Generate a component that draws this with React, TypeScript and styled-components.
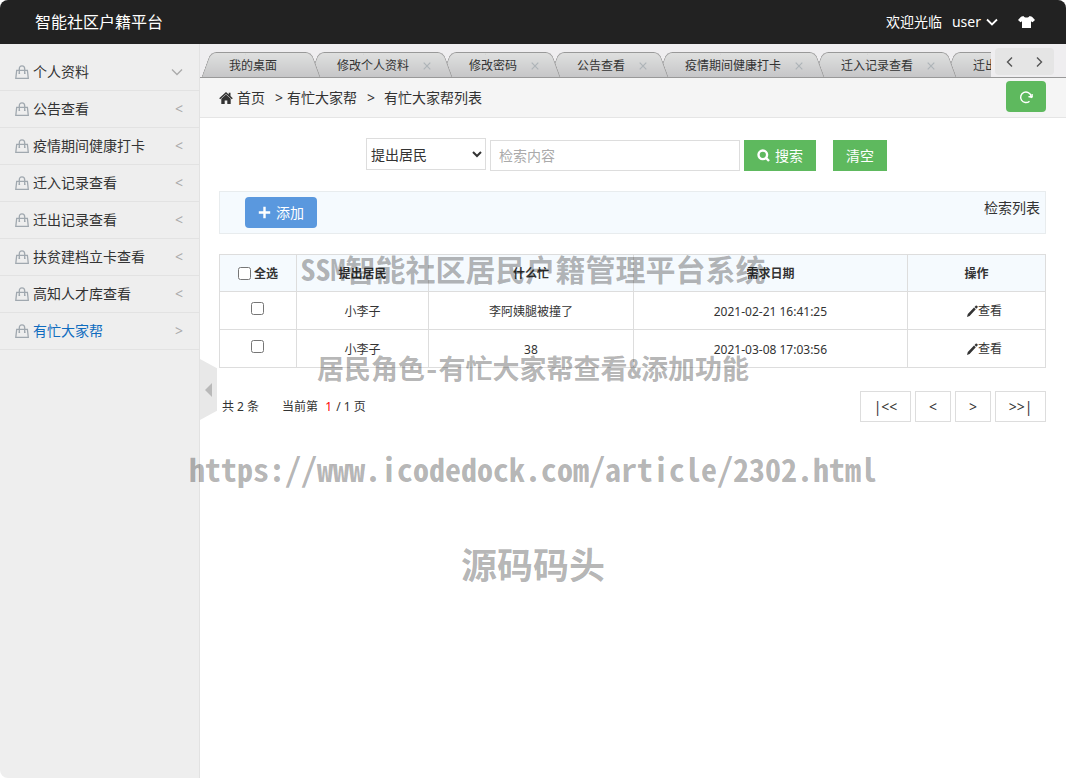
import React from 'react';
import styled, { createGlobalStyle } from 'styled-components';

const GlobalStyle = createGlobalStyle`
  *, *::before, *::after { box-sizing: border-box; }
  html { background: #fff; }
  body {
    margin: 0;
    color: #333;
    font: 14px/20px "Noto Sans", "Noto Sans CJK SC", sans-serif;
  }
  button, input, select { font: inherit; color: inherit; margin: 0; }
  button { cursor: pointer; border: 0; padding: 0; background: none; }
  a { color: inherit; text-decoration: none; }
`;

const Page = styled.div`
  position: relative;
  display: flex;
  flex-direction: column;
  min-height: 100vh;
  overflow: hidden;
  border-radius: 8px;
  background: #fff;
`;

const Header = styled.header`
  display: flex;
  align-items: center;
  justify-content: space-between;
  height: 44px;
  padding: 0 31px 0 35px;
  background: #222;
  color: #fff;
`;

const Brand = styled.h1`
  margin: 0;
  font-size: 16px;
  font-weight: 400;
  line-height: 24px;
`;

const UserArea = styled.div`
  display: flex;
  align-items: center;
  gap: 10px;
`;

const HeaderButton = styled.button`
  display: flex;
  align-items: center;
  gap: 5px;
`;

const SkinButton = styled(HeaderButton)`
  margin-left: 10px;
`;

const Body = styled.div`
  display: flex;
  flex: 1;
`;

const Sidebar = styled.nav`
  flex: none;
  width: 200px;
  padding-top: 10px;
  background: #eee;
  border-right: 1px solid #e2e2e2;
`;

const MenuItem = styled.a<{ $active?: boolean }>`
  display: flex;
  align-items: center;
  gap: 4px;
  height: 37px;
  padding: 0 16px 0 15px;
  border-bottom: 1px solid #e2e2e2;
  color: ${(p) => (p.$active ? '#0f6cbf' : '#333')};
`;

const MenuLabel = styled.span`
  flex: 1;
`;

const MenuArrow = styled.span`
  display: flex;
  color: #aaa;
`;

const CollapseHandle = styled.button`
  position: absolute;
  top: 50%;
  left: 200px;
  display: flex;
  align-items: center;
  width: 17px;
  height: 61px;
  margin-top: -30px;
  padding-left: 5px;
  background: #e8e8e8;
  clip-path: polygon(0 0, 100% 15%, 100% 85%, 0 100%);
`;

const Main = styled.main`
  flex: 1;
  min-width: 0;
`;

const TabBar = styled.div`
  display: flex;
  align-items: flex-end;
  height: 34px;
  background: #efeef0;
  border-bottom: 1px solid #999;
`;

const TabList = styled.div`
  display: flex;
  flex: 1;
  min-width: 0;
  overflow: hidden;
  padding-left: 1px;
`;

const Tab = styled.div<{ $order: number }>`
  position: relative;
  z-index: ${(p) => p.$order};
  display: flex;
  flex: none;
  align-items: center;
  height: 25px;
  margin-right: -12px;
  padding: 2px 22px 0 28px;
  font-size: 12px;

  &::before,
  &::after {
    content: '';
    position: absolute;
    z-index: -1;
    top: 0;
    bottom: 0;
    border-top: 1px solid #999;
    background: linear-gradient(#dfe0df, #c6c6c8);
  }
  &::before {
    left: 5px;
    right: 40%;
    border-left: 1px solid #999;
    border-radius: 6px 0 0 0;
    transform: skewX(-20deg);
  }
  &::after {
    left: 40%;
    right: 5px;
    border-right: 1px solid #999;
    border-radius: 0 6px 0 0;
    transform: skewX(20deg);
  }
`;

const TabTitle = styled.button`
  z-index: 1;
  white-space: nowrap;
  line-height: 20px;
`;

const TabClose = styled.button`
  z-index: 1;
  display: flex;
  justify-content: flex-end;
  width: 22px;
  color: #aeb4b8;
`;

const TabPager = styled.div`
  display: flex;
  align-items: center;
  justify-content: space-around;
  width: 59px;
  height: 27px;
  margin: 0 12px 2px 4px;
  border-radius: 4px;
  background: #e5e5e5;
  color: #555;
`;

const Breadcrumb = styled.nav`
  display: flex;
  align-items: center;
  height: 40px;
  padding: 0 20px 0 19px;
  background: #f5f5f5;
  border-bottom: 1px solid #e5e5e5;
`;

const Crumb = styled.a`
  display: flex;
  align-items: center;
  gap: 4px;
`;

const CrumbSep = styled.span`
  padding: 0 9px 0 10px;
  &:first-of-type { padding-right: 4px; }
`;

const RefreshButton = styled.button`
  display: flex;
  align-items: center;
  justify-content: center;
  width: 40px;
  height: 31px;
  margin: 0 0 2px auto;
  border-radius: 4px;
  background: #5eb95e;
`;

const Content = styled.div`
  padding: 20px 20px 0 19px;
`;

const SearchForm = styled.form`
  display: flex;
  align-items: flex-end;
  justify-content: center;
  gap: 4px;
  height: 33px;
  padding-right: 12px;
`;

const Field = styled.select`
  align-self: flex-start;
  width: 120px;
  height: 32px;
  border: 1px solid #ddd;
  border-radius: 0;
  background: #fff;
`;

const Keyword = styled.input`
  width: 250px;
  height: 31px;
  padding: 0 8px;
  border: 1px solid #ddd;
  border-radius: 0;
  &::placeholder { color: #aaa; opacity: 1; }
`;

const ActionButton = styled.button<{ $tone: string; $rounded?: boolean }>`
  display: flex;
  align-items: center;
  gap: 5px;
  height: 31px;
  padding: 0 13px;
  border-radius: ${(p) => (p.$rounded ? 4 : 0)}px;
  background: ${(p) => p.$tone};
  color: #fff;
`;

const ClearButton = styled(ActionButton)`
  margin-left: 13px;
`;

const Toolbar = styled.div`
  display: flex;
  align-items: flex-start;
  justify-content: space-between;
  height: 43px;
  margin-top: 20px;
  padding: 5px 5px 5px 25px;
  border: 1px solid #e8ecee;
  background: #f5fafe;
`;

const ToolbarNote = styled.span`
  padding-top: 1px;
`;

const Table = styled.table`
  width: 100%;
  margin-top: 20px;
  border-collapse: collapse;
  table-layout: fixed;
  font-size: 12px;
  text-align: center;

  th, td {
    height: 38px;
    padding: 2px 0 0;
    border: 1px solid #ddd;
  }
  th {
    height: 37px;
    background: #f5fafe;
    font-weight: 700;
  }
`;

const Col = styled.col<{ $share: number }>`
  width: ${(p) => p.$share}%;
`;

const Check = styled.input`
  display: block;
  width: 13px;
  height: 13px;
  margin: 0 auto;
`;

const RowCheck = styled(Check)`
  margin-bottom: 6px;
`;

const CheckAll = styled.label`
  display: flex;
  align-items: center;
  justify-content: center;
  gap: 3px;
  ${Check} { margin: 0 0 2px; }
`;

const RowLink = styled.a`
  display: flex;
  align-items: center;
  justify-content: center;
  padding: 0 0 2px 16px;
`;

const Footer = styled.div`
  display: flex;
  align-items: center;
  justify-content: space-between;
  margin-top: 23px;
`;

const Summary = styled.div`
  display: flex;
  gap: 23px;
  padding-left: 3px;
  font-size: 12px;
`;

const CurrentPage = styled.span`
  margin: 0 1px 0 4px;
  color: #f00;
`;

const Pager = styled.div`
  display: flex;
  gap: 4px;
`;

const PageButton = styled.button<{ $wide?: boolean }>`
  width: ${(p) => (p.$wide ? 51 : 36)}px;
  height: 31px;
  border: 1px solid #ddd;
  background: #fff;
`;

const Watermark = styled.div`
  position: absolute;
  z-index: 20;
  top: 248px;
  left: 0;
  right: 0;
  display: flex;
  flex-direction: column;
  align-items: center;
  gap: 60px;
  color: rgba(0, 0, 0, 0.3);
  font-family: "Noto Sans Mono CJK SC", "Noto Sans CJK SC", monospace;
  font-weight: 700;
  pointer-events: none;
`;

const MarkLine = styled.div<{ $size: number; $height?: number }>`
  height: ${(p) => p.$height ?? 40}px;
  font-size: ${(p) => p.$size}px;
  line-height: ${(p) => p.$height ?? 40}px;
  white-space: nowrap;
`;

function Chevron({ dir, size = 12, width = 1.6 }: { dir: 'down' | 'left' | 'right'; size?: number; width?: number }) {
  const d = { down: 'M1 3.5l5 5 5-5', left: 'M8 1.5L3.5 6 8 10.5', right: 'M4 1.5L8.5 6 4 10.5' }[dir];
  return (
    <svg width={size} height={size} viewBox="0 0 12 12" fill="none" stroke="currentColor" strokeWidth={width}>
      <path d={d} />
    </svg>
  );
}

const BagIcon = () => (
  <svg width="14" height="14" viewBox="0 0 14 14" fill="none" stroke="#a0a8af" strokeWidth="1.3">
    <path d="M1.700 5.400h10.700l.900 7.900H.800z" />
    <path d="M4.300 8.600V4C4.300 1.900 5.300.900 7 .900s2.700 1 2.700 3.100v4.600" />
    <path d="M3.600 8.300h1.500M9 8.300h1.500" />
  </svg>
);

const ShirtIcon = () => (
  <svg width="17" height="14" viewBox="0 0 17 14" fill="#fff">
    <path d="M5.400 1c.700 1 1.800 1.500 3.100 1.500S10.900 2 11.600 1L14 1.700 17 5l-2.500 2.300-1.500-1V13H4V6.300l-1.500 1L0 5l3-3.300z" />
  </svg>
);

const HomeIcon = () => (
  <svg width="14" height="12" viewBox="0 0 14 12" fill="#333">
    <path d="M7 0L.200 6.200l1 1L7 2l5.800 5.200 1-1L11.500 4V.800H9.700v1.600z" />
    <path d="M7 2.400L2.300 6.800V12h3.400V8.500h2.600V12h3.400V6.800z" />
  </svg>
);

const RefreshIcon = () => (
  <svg width="14" height="14" viewBox="0 0 14 14" fill="none" stroke="#fff" strokeWidth="1.400">
    <path d="M10.500 11.200A5.300 5.300 0 1 1 12.100 6" />
    <path d="M9.400 6.300h4.300L12.600 8.300z" fill="#fff" stroke="none" />
    <path d="M9.500 6.800h3.600V4" />
  </svg>
);

const SearchIcon = () => (
  <svg width="13" height="13" viewBox="0 0 13 13" fill="none" stroke="#fff" strokeWidth="2.400">
    <circle cx="5.800" cy="5.800" r="4.300" />
    <path d="M8.700 8.700l3.300 3.300" />
  </svg>
);

const PlusIcon = () => (
  <svg width="13" height="13" viewBox="0 0 13 13" stroke="#fff" strokeWidth="2.400">
    <path d="M6.500.800v11.400M.800 6.500h11.400" />
  </svg>
);

const PencilIcon = () => (
  <svg width="11" height="12" viewBox="0 0 11 12" fill="#333">
    <path d="M0 12l.800-3L7 2.500l1.800 1.800-6.200 6.600zM7.500 2L9 .500c.600-.500 2.200 1 1.700 1.700L9.300 3.800z" />
  </svg>
);

const CloseIcon = () => (
  <svg width="8" height="8" viewBox="0 0 8 8" stroke="currentColor" strokeWidth="1.200">
    <path d="M.700.700l6.600 6.600M7.300.700L.700 7.300" />
  </svg>
);

const menu = ['个人资料', '公告查看', '疫情期间健康打卡', '迁入记录查看', '迁出记录查看', '扶贫建档立卡查看', '高知人才库查看', '有忙大家帮'];
const tabs = ['我的桌面', '修改个人资料', '修改密码', '公告查看', '疫情期间健康打卡', '迁入记录查看', '迁出记录查看'];
const rows = [
  { who: '小李子', what: '李阿姨腿被撞了', date: '2021-02-21 16:41:25' },
  { who: '小李子', what: '38', date: '2021-03-08 17:03:56' },
];

export default function App() {
  return (
    <>
      <GlobalStyle />
      <Page>
        <Header>
          <Brand>智能社区户籍平台</Brand>
          <UserArea>
            <span>欢迎光临</span>
            <HeaderButton>user <Chevron dir="down" width={1.8} /></HeaderButton>
            <SkinButton aria-label="换肤"><ShirtIcon /></SkinButton>
          </UserArea>
        </Header>
        <Body>
          <Sidebar>
            {menu.map((label, i) => {
              const active = i === menu.length - 1;
              return (
                <MenuItem key={label} href="#" $active={active}>
                  <BagIcon />
                  <MenuLabel>{label}</MenuLabel>
                  <MenuArrow>{i === 0 ? <Chevron dir="down" width={1.3} /> : active ? '>' : '<'}</MenuArrow>
                </MenuItem>
              );
            })}
          </Sidebar>
          <Main>
            <TabBar>
              <TabList>
                {tabs.map((label, i) => (
                  <Tab key={label} $order={tabs.length - i}>
                    <TabTitle>{label}</TabTitle>
                    <TabClose aria-label={`关闭 ${label}`}>{i > 0 && <CloseIcon />}</TabClose>
                  </Tab>
                ))}
              </TabList>
              <TabPager>
                <HeaderButton aria-label="向左"><Chevron dir="left" width={1.4} /></HeaderButton>
                <HeaderButton aria-label="向右"><Chevron dir="right" width={1.4} /></HeaderButton>
              </TabPager>
            </TabBar>
            <Breadcrumb>
              <Crumb href="#"><HomeIcon />首页</Crumb>
              <CrumbSep>&gt;</CrumbSep>
              <Crumb href="#">有忙大家帮</Crumb>
              <CrumbSep>&gt;</CrumbSep>
              <Crumb href="#">有忙大家帮列表</Crumb>
              <RefreshButton aria-label="刷新"><RefreshIcon /></RefreshButton>
            </Breadcrumb>
            <Content>
              <SearchForm onSubmit={(e) => e.preventDefault()}>
                <Field aria-label="检索字段"><option>提出居民</option></Field>
                <Keyword aria-label="检索内容" placeholder="检索内容" />
                <ActionButton type="submit" $tone="#5eb95e"><SearchIcon />搜索</ActionButton>
                <ClearButton type="reset" $tone="#5eb95e">清空</ClearButton>
              </SearchForm>
              <Toolbar>
                <ActionButton $tone="#5a98de" $rounded><PlusIcon />添加</ActionButton>
                <ToolbarNote>检索列表</ToolbarNote>
              </Toolbar>
              <Table>
                <colgroup>
                  <Col $share={9.3} />
                  <Col $share={16} />
                  <Col $share={24.8} />
                  <Col $share={33.2} />
                  <Col $share={16.7} />
                </colgroup>
                <thead>
                  <tr>
                    <th><CheckAll><Check type="checkbox" />全选</CheckAll></th>
                    <th>提出居民</th>
                    <th>什么忙</th>
                    <th>需求日期</th>
                    <th>操作</th>
                  </tr>
                </thead>
                <tbody>
                  {rows.map((r) => (
                    <tr key={r.date}>
                      <td><RowCheck type="checkbox" aria-label={r.what} /></td>
                      <td>{r.who}</td>
                      <td>{r.what}</td>
                      <td>{r.date}</td>
                      <td><RowLink href="#"><PencilIcon />查看</RowLink></td>
                    </tr>
                  ))}
                </tbody>
              </Table>
              <Footer>
                <Summary>
                  <span>共 2 条</span>
                  <span>当前第 <CurrentPage>1</CurrentPage> / 1 页</span>
                </Summary>
                <Pager>
                  <PageButton $wide>|&lt;&lt;</PageButton>
                  <PageButton>&lt;</PageButton>
                  <PageButton>&gt;</PageButton>
                  <PageButton $wide>&gt;&gt;|</PageButton>
                </Pager>
              </Footer>
            </Content>
          </Main>
        </Body>
        <CollapseHandle aria-label="收起菜单">
          <svg width="7" height="14" viewBox="0 0 7 14" fill="#b9b9b9"><path d="M7 0v14L0 7z" /></svg>
        </CollapseHandle>
        <Watermark>
          <MarkLine $size={30}>SSM智能社区居民户籍管理平台系统</MarkLine>
          <MarkLine $size={27}>居民角色-有忙大家帮查看&amp;添加功能</MarkLine>
          <MarkLine $size={32}>https://www.icodedock.com/article/2302.html</MarkLine>
          <MarkLine $size={36} $height={30}>源码码头</MarkLine>
        </Watermark>
      </Page>
    </>
  );
}
